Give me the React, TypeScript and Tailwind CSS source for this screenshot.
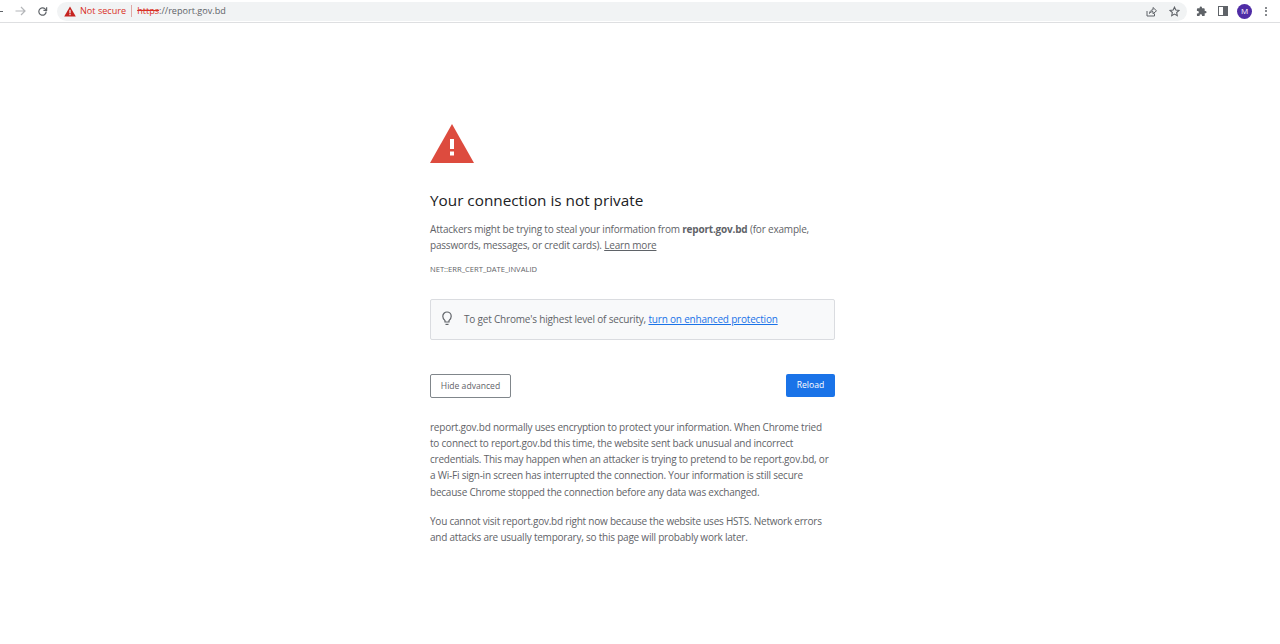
import React from 'react'

const AddressBar = () => (
  <div className="flex h-[19px] flex-1 items-center rounded-full bg-[#f1f3f4] pl-[7px] pr-[6px]">
    <svg width="12" height="11" viewBox="0 0 12 11" className="shrink-0">
      <path d="M6 0.5 L11.8 10.6 H0.2 Z" fill="#c5221f" />
      <rect x="5.4" y="3.8" width="1.2" height="3.6" fill="#f1f3f4" />
      <rect x="5.4" y="8" width="1.2" height="1.2" fill="#f1f3f4" />
    </svg>
    <span className="ml-[4px] text-[9.1px] text-[#d93025]">Not secure</span>
    <span className="mx-[5px] h-[12px] w-px bg-[#e0a8a4]" />
    <span className="text-[9.1px] text-[#5f6368]">
      <span className="text-[#d93025] line-through">https</span>
      ://report.gov.bd
    </span>
    <div className="ml-auto mr-[1px] flex items-center gap-[12px]">
      {/* share */}
      <svg width="11" height="11" viewBox="0 0 11 11" fill="none" stroke="#5f6368" strokeWidth="1">
        <path d="M1 5 V10 H8.5 V7.5" />
        <path d="M3.5 7.5 C3.7 5 5.5 3.8 7 3.8 V1.5 L10.5 4.8 L7 7.8 V5.6 C5.6 5.6 4.4 6.1 3.5 7.5 Z" />
      </svg>
      {/* star */}
      <svg width="11" height="11" viewBox="0 0 24 24" fill="none" stroke="#5f6368" strokeWidth="2.4">
        <path d="M12 2.5 l2.9 6.3 6.9 .8 -5.1 4.7 1.4 6.8 -6.1 -3.4 -6.1 3.4 1.4 -6.8 -5.1 -4.7 6.9 -.8 Z" />
      </svg>
    </div>
  </div>
)

const Toolbar = () => (
  <div className="flex h-[23px] items-center border-b border-[#dedfe1] bg-white">
    <div className="h-px w-[3px] shrink-0 bg-[#5f6368]" />
    {/* forward */}
    <svg width="11" height="10" viewBox="0 0 11 10" fill="none" stroke="#b4b6b9" strokeWidth="1.2" className="ml-[12px] shrink-0">
      <path d="M0.5 5 H10 M6 1 L10 5 L6 9" />
    </svg>
    {/* reload */}
    <svg width="11" height="11" viewBox="0 0 24 24" fill="none" stroke="#5f6368" strokeWidth="2.6" className="ml-[11px] shrink-0">
      <path d="M20 12 a8 8 0 1 1 -2.4 -5.7 L20 8.5" />
      <path d="M21 2.5 V9.5 H14" />
    </svg>
    <div className="ml-[9px] mr-[9px] flex flex-1">
      <AddressBar />
    </div>
    <div className="flex items-center">
      {/* extensions */}
      <svg width="11" height="11" viewBox="0 0 24 24" fill="#5f6368" className="shrink-0">
        <path d="M20.5 11H19V7a2 2 0 0 0-2-2h-4V3.5a2.5 2.5 0 0 0-5 0V5H4a2 2 0 0 0-2 2v3.8h1.5a2.7 2.7 0 0 1 0 5.4H2V20a2 2 0 0 0 2 2h3.8v-1.5a2.7 2.7 0 0 1 5.4 0V22H17a2 2 0 0 0 2-2v-4h1.5a2.5 2.5 0 0 0 0-5z" />
      </svg>
      {/* side panel */}
      <div className="ml-[11px] flex h-[10px] w-[10px] justify-end border border-[#5f6368]">
        <div className="w-[4px] bg-[#5f6368]" />
      </div>
      <div className="ml-[9px] flex h-[15px] w-[15px] items-center justify-center rounded-full bg-[#4f2ca5] text-[8px] leading-none text-white">
        M
      </div>
      {/* menu */}
      <div className="ml-[13px] mr-[13px] flex flex-col gap-[1.5px]">
        <div className="h-[2px] w-[2px] rounded-full bg-[#5f6368]" />
        <div className="h-[2px] w-[2px] rounded-full bg-[#5f6368]" />
        <div className="h-[2px] w-[2px] rounded-full bg-[#5f6368]" />
      </div>
    </div>
  </div>
)

const App = () => {
  return (
    <div className="h-[644px] w-[1280px] overflow-hidden bg-white font-['Open_Sans',sans-serif] text-[#5f6368]">
      <Toolbar />
      <div className="ml-[430px] w-[405px] pt-[101px]">
        <svg width="44" height="39" viewBox="0 0 44 39" className="block">
          <path d="M22 0 L44 39 H0 Z" fill="#dd4b3e" />
          <rect x="20" y="15" width="4" height="10" fill="#fff" />
          <rect x="20" y="27.5" width="4" height="4" fill="#fff" />
        </svg>
        <h1 className="mt-[27px] text-[15.3px] font-normal leading-[20px] text-[#202124]">
          Your connection is not private
        </h1>
        <p className="mt-[11px] text-[10px] leading-[16.3px] tracking-[-0.19px]">
          Attackers might be trying to steal your information from{' '}
          <strong className="font-bold">report.gov.bd</strong> (for example, passwords, messages, or
          credit cards). <span className="underline">Learn more</span>
        </p>
        <div className="mt-[9px] text-[7.6px] leading-[12px]">NET::ERR_CERT_DATE_INVALID</div>
        <div className="mt-[24px] flex h-[41px] items-center rounded-[2px] border border-[#dadce0] bg-[#f8f9fa] pl-[11px]">
          <svg width="10" height="15" viewBox="0 0 10 15" fill="none" stroke="#5f6368" strokeWidth="1.2" className="-mt-px shrink-0">
            <path d="M3 9.6 C2 8.6 0.8 7.6 0.8 5.2 A4.2 4.2 0 0 1 9.2 5.2 C9.2 7.6 8 8.6 7 9.6 V11 H3 Z" />
            <path d="M3.5 13.4 H6.5" />
          </svg>
          <span className="ml-[12px] pt-px text-[10px] tracking-[-0.19px]">
            To get Chrome's highest level of security,{' '}
            <span className="text-[#1a73e8] underline">turn on enhanced protection</span>
          </span>
        </div>
        <div className="mt-[34px] flex items-start justify-between">
          <button className="h-[24px] w-[81px] rounded-[2px] border border-[#80868b] bg-white pt-[2px] text-[8.6px] text-[#5f6368]">
            Hide advanced
          </button>
          <button className="h-[23px] w-[49px] rounded-[2px] bg-[#1a73e8] pt-px text-[8.6px] text-white">
            Reload
          </button>
        </div>
        <p className="mt-[21px] w-[401px] text-[10px] leading-[16.3px] tracking-[-0.22px]">
          report.gov.bd normally uses encryption to protect your information. When Chrome tried to
          connect to report.gov.bd this time, the website sent back unusual and incorrect credentials.
          This may happen when an attacker is trying to pretend to be report.gov.bd, or a Wi-Fi sign-in
          screen has interrupted the connection. Your information is still secure because Chrome
          stopped the connection before any data was exchanged.
        </p>
        <p className="mt-[13px] text-[10px] leading-[16.3px] tracking-[-0.22px]">
          You cannot visit report.gov.bd right now because the website uses HSTS. Network errors and
          attacks are usually temporary, so this page will probably work later.
        </p>
      </div>
    </div>
  )
}

export default App
